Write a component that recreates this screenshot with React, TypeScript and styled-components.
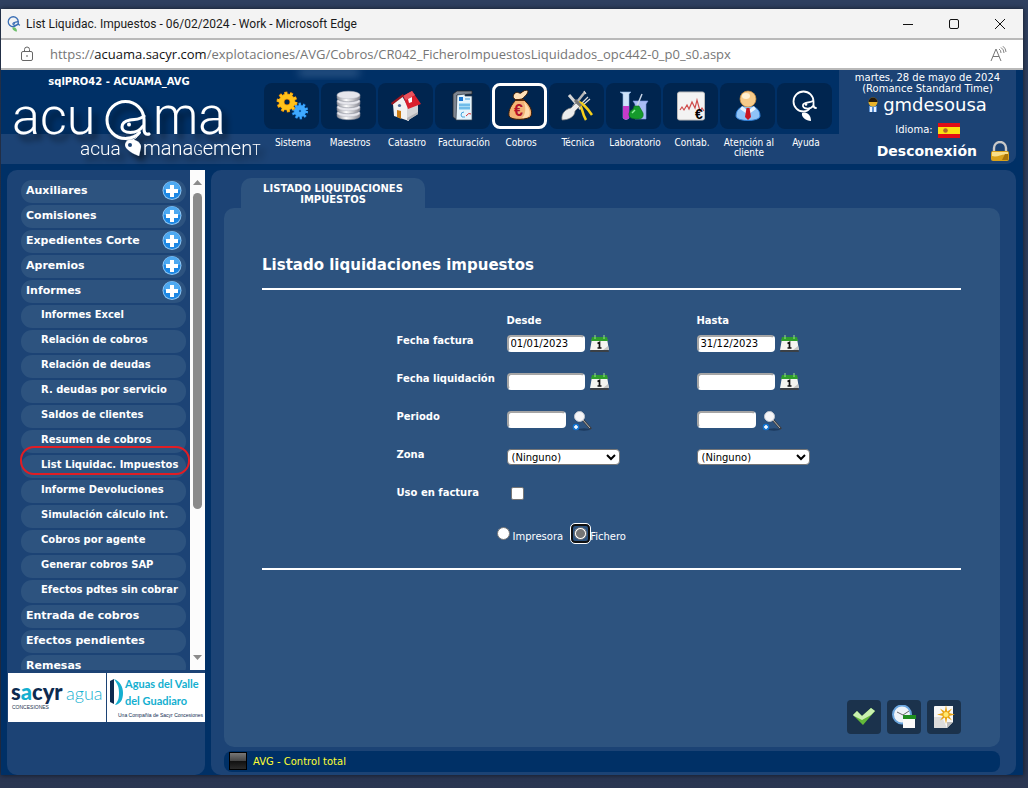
import React from "react";
import styled, { createGlobalStyle, css } from "styled-components";

const c = {
  deep: "#003066",
  band: "#1c4375",
  panel: "#2d537f",
  tile: "#00254f",
};

const Global = createGlobalStyle`
  * { box-sizing: border-box; }
  html, body { margin: 0; }
  body {
    font-family: "DejaVu Sans", Verdana, sans-serif;
    font-size: 10px;
    color: #fff;
    background: #2b3855;
  }
  a { color: inherit; text-decoration: none; }
  button { font: inherit; color: inherit; cursor: pointer; }
  svg { display: block; flex: none; }
`;

/* ---------- window ---------- */

const Desktop = styled.div`
  min-height: 100vh;
  display: flex;
  flex-direction: column;
  padding: 9px 5px 13px 1px;
  background: linear-gradient(#2f4060, #2a3652);
`;

const Window = styled.div`
  flex: 1;
  display: flex;
  flex-direction: column;
  background: ${c.deep};
  box-shadow: 0 0 5px rgba(0, 0, 0, 0.6);
`;

const TitleBar = styled.header`
  display: flex;
  align-items: center;
  height: 31px;
  padding-left: 5px;
  background: #f3f3f3;
  border-bottom: 2px solid #b9b9b9;
  color: #1b1b1b;
  font: 12px/16px Roboto, "Segoe UI", sans-serif;
`;

const WindowTitle = styled.span`
  flex: 1;
  margin-left: 4px;
`;

const WindowButton = styled.button`
  width: 46px;
  height: 29px;
  padding: 0;
  border: 0;
  background: none;
  display: flex;
  align-items: center;
  justify-content: center;
`;

const AddressBar = styled.div`
  display: flex;
  align-items: center;
  height: 30px;
  padding: 0 16px 0 19px;
  background: #fff;
  border-bottom: 2px solid #b9b9b9;
  color: #767676;
  font: 13px/20px "Open Sans", "Segoe UI", sans-serif;
`;

const Url = styled.span`
  flex: 1;
  margin-left: 16px;
  b { font-weight: 400; color: #111; }
`;

/* ---------- page header ---------- */

const Header = styled.header`
  position: relative;
  display: grid;
  grid-template-columns: 262px 1fr 177px;
  height: 94px;
  margin-right: 7px;
  border-bottom-right-radius: 10px;
  background: linear-gradient(${c.deep} 64px, ${c.band} 64px);
`;

const Glow = styled.div`
  position: absolute;
  left: 290px;
  top: 0;
  width: 76px;
  height: 10px;
  overflow: hidden;
  &::before {
    content: "";
    display: block;
    height: 5px;
    margin: 0 8px;
    background: rgba(130, 160, 195, 0.5);
    filter: blur(4px);
  }
`;

const Brand = styled.div`
  padding-top: 5px;
`;

const Environment = styled.div`
  padding-right: 26px;
  text-align: center;
  font-weight: 700;
  line-height: 14px;
`;

const Nav = styled.nav`
  display: flex;
  padding: 13px 0 0 1px;
  font-family: "DejaVu Sans Condensed", Tahoma, sans-serif;
  font-stretch: condensed;
`;

const NavLink = styled.a`
  width: 57px;
  display: flex;
  flex-direction: column;
  gap: 9px;
  text-align: center;
  line-height: 10px;
`;

const NavTile = styled.span<{ $on?: boolean }>`
  width: 55px;
  height: 46px;
  display: flex;
  align-items: center;
  justify-content: center;
  border-radius: 8px;
  background: ${c.tile};
  border: ${(p) => (p.$on ? "3px solid #fff" : "0")};
`;

const NavLabel = styled.span`
  padding-left: 1px;
`;

const Session = styled.div`
  display: flex;
  flex-direction: column;
  align-items: center;
  padding-top: 2px;
  background: ${c.band};
  border-bottom-right-radius: 10px;
  text-align: center;
  line-height: 11px;
`;

const User = styled.div`
  display: flex;
  align-items: center;
  gap: 5px;
  font-size: 18px;
  line-height: 22px;
`;

const Language = styled.div`
  display: flex;
  align-items: center;
  gap: 5px;
  margin-top: 6px;
  line-height: 16px;
`;

const Logout = styled.a`
  align-self: stretch;
  display: flex;
  align-items: center;
  justify-content: flex-end;
  gap: 13px;
  padding-right: 6px;
  margin-top: 2px;
  font-size: 14px;
  line-height: 22px;
  font-weight: 700;
`;

/* ---------- body ---------- */

const Body = styled.div`
  flex: 1;
  display: grid;
  grid-template-columns: 198px 1fr;
  gap: 6px;
  padding: 6px 7px 0 6px;
`;

const Sidebar = styled.aside`
  background: ${c.band};
  border-radius: 10px;
`;

const MenuArea = styled.div`
  display: flex;
  height: 500px;
  overflow: hidden;
`;

const Menu = styled.ul`
  flex: 1;
  list-style: none;
  margin: 0;
  padding: 10px 4px 0 14px;
  display: flex;
  flex-direction: column;
  gap: 2px;
`;

const MenuItem = styled.li`
  flex: none;
  height: 23px;
  border-radius: 11px;
  background: ${c.panel};
`;

const MenuLink = styled.a<{ $sub?: boolean }>`
  display: flex;
  justify-content: space-between;
  white-space: nowrap;
  font-weight: 700;
  ${(p) =>
    p.$sub
      ? css`padding-left: 20px; font-size: 10px; line-height: 20px;`
      : css`padding: 0 4px 0 5px; font-size: 11px; line-height: 21px;`}
`;

const Marked = styled.div`
  position: relative;
  &::after {
    content: "";
    position: absolute;
    top: -9px;
    left: -1px;
    right: -4px;
    height: 25px;
    border: 2px solid #e11d24;
    border-radius: 14px;
    pointer-events: none;
  }
`;

const ScrollTrack = styled.div`
  width: 15px;
  display: flex;
  flex-direction: column;
  align-items: center;
  padding: 10px 0;
  background: #fcfcfc;
`;

const ScrollThumb = styled.div`
  width: 9px;
  height: 316px;
  margin: 8px 0 auto;
  border-radius: 5px;
  background: #8b8b8b;
`;

const Partners = styled.div`
  display: flex;
  gap: 1px;
  margin: 3px 0 0 1px;
`;

const Partner = styled.div`
  flex: 1;
  height: 49px;
  background: #fff;
`;

const Main = styled.main`
  display: flex;
  flex-direction: column;
  padding: 8px 16px 3px 13px;
  background: ${c.band};
  border-radius: 10px;
`;

const Tab = styled.a`
  align-self: flex-start;
  width: 184px;
  height: 30px;
  margin-left: 17px;
  padding: 5px 10px 0;
  border-radius: 10px 10px 0 0;
  background: ${c.panel};
  text-align: center;
  font-weight: 700;
  line-height: 11px;
`;

const Panel = styled.section`
  flex: 1;
  display: flex;
  flex-direction: column;
  padding: 47px 39px 13px 38px;
  border-radius: 10px;
  background: ${c.panel};
`;

const Heading = styled.h1`
  margin: 0;
  padding-bottom: 13px;
  border-bottom: 2px solid #fff;
  font-size: 15px;
  line-height: 20px;
`;

const Form = styled.form`
  display: grid;
  grid-template-columns: 110px 190px 130px;
  grid-template-rows: 20px;
  grid-auto-rows: 38px;
  justify-content: center;
  padding: 21px 0 9px;
  border-bottom: 2px solid #fff;
  line-height: 20px;
`;

const Caption = styled.label`
  font-weight: 700;
`;

const ColumnHead = styled.span`
  font-weight: 700;
`;

const Field = styled.div`
  display: flex;
  align-items: flex-start;
  gap: 5px;
  padding-top: 4px;
`;

const TextInput = styled.input<{ $w: number }>`
  width: ${(p) => p.$w}px;
  height: 17px;
  padding: 0 2px;
  border: 2px solid #fff;
  border-top-color: #a5a5a5;
  border-left-color: #a5a5a5;
  border-radius: 4px;
  background: #fff;
  color: #000;
  font: 10px/13px "DejaVu Sans", Verdana, sans-serif;
`;

const Picker = styled.button<{ $gap?: number }>`
  padding: 0;
  margin-left: ${(p) => p.$gap || 0}px;
  border: 0;
  background: none;
`;

const SelectBox = styled.div`
  position: relative;
  display: flex;
  svg { position: absolute; right: 4px; top: 5px; pointer-events: none; }
`;

const Select = styled.select`
  appearance: none;
  width: 113px;
  height: 16px;
  padding: 0 4px;
  border: 1px solid #767676;
  border-radius: 4px;
  background: #fff;
  color: #000;
  font: 10px/13px "DejaVu Sans", Verdana, sans-serif;
`;

const Check = styled.input`
  appearance: none;
  width: 13px;
  height: 13px;
  margin: 0 0 0 4px;
  border: 1px solid #767676;
  border-radius: 2px;
  background: #fff;
`;

const Output = styled.div`
  grid-column: 1 / -1;
  display: flex;
  align-items: center;
  height: 25px;
  padding-left: 100px;
`;

const Option = styled.label<{ $before?: number; $after?: number }>`
  padding: 6px ${(p) => p.$after || 0}px 0 ${(p) => p.$before || 0}px;
  line-height: 12px;
`;

const Radio = styled.input`
  appearance: none;
  width: 13px;
  height: 13px;
  margin: 0;
  border: 1px solid #767676;
  border-radius: 50%;
  background: #fff;
  &:checked {
    border-color: #757575;
    background: radial-gradient(circle, #757575 4px, #fff 5px);
  }
`;

const FocusRing = styled.span`
  display: flex;
  padding: 1px;
  border: 2px solid #101010;
  border-radius: 4px;
  outline: 1px solid #fff;
`;

const Actions = styled.div`
  display: flex;
  justify-content: flex-end;
  gap: 6px;
  margin-top: auto;
`;

const Action = styled.button`
  width: 34px;
  height: 34px;
  padding: 0;
  border: 0;
  border-radius: 4px;
  background: #1b324c;
  display: flex;
  align-items: center;
  justify-content: center;
`;

const Status = styled.footer`
  display: flex;
  align-items: center;
  gap: 6px;
  height: 21px;
  margin-top: 4px;
  padding: 0 0 1px 5px;
  border-radius: 8px;
  background: ${c.deep};
  color: #ffff33;
`;

const StatusLight = styled.span`
  width: 18px;
  height: 18px;
  border: 1px solid #000;
  background: linear-gradient(#777, #444 50%, #111 52%, #2b2b2b);
`;

/* ---------- drawings ---------- */

const Mark = ({ size = 16, from = "#3b6fb5", to = "#6cbf6a", w = 2.6 }) => (
  <svg width={size} height={size} viewBox="0 0 32 32" fill="none" strokeLinecap="round">
    <path d="M27 18c-2 0-2.500-1-2.500-3v-3.500A10 10 0 1 0 14.500 21.500q4 0 6-3" stroke={from} strokeWidth={w} />
    <path d="M24 11c-3 2-9 1-10 4-1 4 7 5 10 1" stroke={from} strokeWidth={w} />
    <circle cx="17" cy="14.500" r="1.300" fill={from} />
    <path d="M13 23c5-2 9 2 9 8-5 0-10-4-9-8z" fill={to} />
  </svg>
);

const BrandLogo = () => (
  <svg width="262" height="74" viewBox="0 89 262 74" fill="#fff" overflow="visible" role="img" aria-label="acuama management">
    <defs>
      <filter id="soft" x="-10%" y="-10%" width="130%" height="150%">
        <feDropShadow dx="5" dy="6" stdDeviation="3" floodColor="#000" floodOpacity="0.55" />
      </filter>
    </defs>
    <g filter="url(#soft)" fontFamily="Roboto, sans-serif" fontWeight="300">
      <text x="11" y="134" fontSize="52">acu</text>
      <text x="152" y="134" fontSize="51">ma</text>
      <g fill="none" stroke="#fff" strokeLinecap="round">
        <path d="M148 134c-4 1-5-2-5-5v-9A18.500 18.500 0 1 0 124.500 138.500q9 0 14-6" strokeWidth="3" />
        <path d="M143 116c-4 4-9 3-14 4-5 1-8 3-8 7 0 7 15 8 21-1" strokeWidth="3" />
        <path d="M126 141c6 0 10-3 12-7" strokeWidth="1" />
      </g>
      <circle cx="128" cy="124.500" r="2" />
      <path d="M126 141c6-4 14 1 14 6l-2 9c-6-2-14-7-14-11 0-2 1-3 2-4z" />
      <text x="79" y="155" fontSize="19">acua</text>
      <text x="142" y="155" fontSize="20">mana<tspan fontSize="14">G</tspan>emen<tspan fontSize="14">T</tspan></text>
    </g>
    <circle cx="129" cy="145" r="2" fill={c.band} />
  </svg>
);

const Gear = ({ x, y, r, fill, edge }: { x: number; y: number; r: number; fill: string; edge: string }) => {
  const tooth = ((r + 1) * 6.283) / 20;
  return (
    <g transform={`translate(${x} ${y})`} fill="none">
      <circle r={r + 1} stroke={edge} strokeWidth="5" strokeDasharray={`${tooth}`} />
      <circle r={r - 1.5} stroke={edge} strokeWidth="6" />
      <circle r={r + 1} stroke={fill} strokeWidth="3.600" strokeDasharray={`${tooth}`} />
      <circle r={r - 1.5} stroke={fill} strokeWidth="4.600" />
    </g>
  );
};

const Icon = ({ children }: { children: React.ReactNode }) => (
  <svg width="32" height="32" viewBox="0 0 32 32">{children}</svg>
);

const icons: Record<string, React.ReactNode> = {
  Sistema: (
    <Icon>
      <Gear x={24} y={21} r={5} fill="#3fa9ff" edge="#1670c8" />
      <Gear x={11} y={12} r={7} fill="#ffc21a" edge="#e88a00" />
    </Icon>
  ),
  Maestros: (
    <Icon>
      <defs>
        <linearGradient id="disk">
          <stop stopColor="#8d8f99" /><stop offset=".4" stopColor="#fff" /><stop offset="1" stopColor="#85858f" />
        </linearGradient>
      </defs>
      {[25, 19, 13, 7].map((y) => (
        <g key={y}>
          <path d={`M4 ${y - 2}v3c0 5 23 5 23 0v-3z`} fill="url(#disk)" stroke="#7d808e" strokeWidth=".5" />
          <ellipse cx="15.500" cy={y - 2} rx="11.500" ry="3.800" fill="#e6e6ec" stroke="#b5b6c0" strokeWidth=".5" />
        </g>
      ))}
    </Icon>
  ),
  Catastro: (
    <Icon>
      <path d="M3 14l9-8 7 12v13L4 26z" fill="#f2f2f2" />
      <path d="M17 18l11-5v11l-11 7z" fill="#d4d4d6" />
      <path d="M13 6l9-5 9 13-13 5z" fill="#d91f2d" />
      <path d="M13 6l9-5 3 4-9 5z" fill="#e9525c" />
      <path d="M1 13L13 4l1 2-12 9z" fill="#9c1620" />
      <path d="M18 9l4-2v5l-3 1z" fill="#fff" />
      <path d="M7 20l4 1v8l-4-2z" fill="#c97a12" />
      <circle cx="9.500" cy="15.500" r="1.600" fill="#4a6a9a" />
      <path d="M17 31l11-7v-2l-11 6z" fill="#b5b5b8" />
    </Icon>
  ),
  Facturación: (
    <Icon>
      <path d="M6 4l4-3h15v3L10 5v25l-4-3z" fill="#7d8590" stroke="#222" strokeWidth=".7" />
      <path d="M10 5l8-1v2h7v24H9z" fill="#e4f4fd" stroke="#384451" strokeWidth=".7" />
      <path d="M12 7h4v4h-4z" fill="#1976d2" />
      <path d="M12 13h11v7H12z" fill="#a6dbf5" />
      <path d="M18 9h5M12 15h11M12 18h11" stroke="#3a9ddd" />
      <path d="M19 26q3-4 5-2" stroke="#d33" fill="none" />
      <path d="M17 22q-3 0-3 3t4 2" stroke="#48a4dc" fill="none" />
    </Icon>
  ),
  Cobros: (
    <Icon>
      <path d="M11 3c3-2 4 1 6 0 3-3 7-4 7-1-1 3-4 5-6 7l-6 1c-3-2-4-4-1-7z" fill="#ffe0b8" stroke="#3a1c08" />
      <path d="M12 10h8c6 5 9 11 7 16-2 4-20 5-22 0-1-6 3-12 7-16z" fill="#f4b476" stroke="#3a1c08" />
      <path d="M20 12c5 5 7 10 5 14-2 2-5 2-7 2 4-4 4-10 2-16z" fill="#ffdcae" />
      <path d="M11 10h9" stroke="#5a2b0c" strokeWidth="2" />
      <text x="10" y="26" fontSize="16" fontWeight="700" fill="#b3122a" fontFamily="Liberation Sans, sans-serif">€</text>
    </Icon>
  ),
  Técnica: (
    <Icon>
      <path d="M8 5l12 14" stroke="#d5d5d5" strokeWidth="3" />
      <path d="M12 17L24 2" stroke="#b8b8b8" strokeWidth="2.500" />
      <path d="M1 30c-1-6 3-11 9-12l5-5 4 3-5 5c0 6-7 9-13 9z" fill="#ececec" stroke="#777" strokeWidth=".7" />
      <path d="M23 1l2 3M21 13l6-6M22 15l7-6" stroke="#ddd" strokeWidth="1.200" />
      <path d="M17 13c5 3 3 9 8 17M18 12c5 2 9 7 13 13" fill="none" stroke="#f6cf1b" strokeWidth="2.500" />
      <path d="M14 10l6 6" stroke="#777" strokeWidth="3" />
    </Icon>
  ),
  Laboratorio: (
    <Icon>
      <path d="M2 2h11l-2 2v24q-3 3-6 0V4z" fill="#cfe4fb" stroke="#8cb2e0" strokeWidth=".6" />
      <path d="M5 16h6v12q-3 3-6 0z" fill="#c63bcb" />
      <path d="M15 11h15l-2 3v15H17V14z" fill="#a9bdf5" stroke="#7c96e0" strokeWidth=".6" />
      <path d="M24 4l-5 12" stroke="#c9d6e8" strokeWidth="1.500" />
      <path d="M16 16h5l4 7c1 5-2 6-6 6s-9-1-8-6c1-3 5-3 5-7z" fill="#159a2c" stroke="#0c6a1c" strokeWidth=".6" />
      <path d="M14 23l3-3" stroke="#8ef09a" strokeWidth="1.500" />
    </Icon>
  ),
  "Contab.": (
    <Icon>
      <rect x="2.500" y="2" width="27" height="28" rx="2" fill="#f3f3f3" stroke="#bbb" />
      <path d="M5 20l2-3 2 3 3-5 2 4 3-7 3 6 2-8 3 11 2-3 2 3" fill="none" stroke="#cf4b4b" strokeWidth="1.200" />
      <text x="20" y="29" fontSize="14" fontWeight="700" fill="#000" fontFamily="Liberation Sans, sans-serif">€</text>
    </Icon>
  ),
  "Atención al cliente": (
    <Icon>
      <path d="M4 26c0-7 5-10 12-10s12 3 12 10c0 6-24 6-24 0z" fill="#8fc3f7" stroke="#2f7fd6" />
      <path d="M10 16l6 5 6-5 2 3-7 5h-2l-7-5z" fill="#e8f4ff" />
      <path d="M14.500 18h3l1.500 9-3 3-3-3z" fill="#c9151f" />
      <circle cx="16" cy="9" r="8" fill="#f7cb8a" stroke="#c98b3c" strokeWidth=".7" />
      <ellipse cx="14" cy="6" rx="4" ry="3" fill="#fff0d2" />
    </Icon>
  ),
  Ayuda: <Mark size={32} from="#fff" to="#fff" w={1.8} />,
};

const Plus = () => (
  <svg width="20" height="20" viewBox="0 0 20 20">
    <circle cx="10" cy="10.500" r="9.500" fill="#8cc6f5" />
    <circle cx="10" cy="10.500" r="8.500" fill="#1b86e3" />
    <path d="M2 9.500a8 8 0 0 1 16 0c-4 2-12 2-16 0z" fill="#4da9f1" />
    <path d="M8 5h4v4h4v4h-4v4H8v-4H4V9h4z" fill="#fff" />
  </svg>
);

const Calendar = () => (
  <svg width="19" height="18" viewBox="0 0 19 18">
    <path d="M1 14h17l1 3H0z" fill="#3b4045" />
    <path d="M2 4h15l2 11H0z" fill="#f5f5f0" />
    <path d="M2 2h15l1 4H1z" fill="#2f9e2b" />
    <path d="M5 0v4M14 0v4" stroke="#9be08f" />
    <path d="M13 15l5-4 1 4z" fill="#c7c7c4" />
    <path d="M7.500 8.500l2-1V13M7.500 13h4" fill="none" stroke="#111" strokeWidth="1.700" />
  </svg>
);

const Search = () => (
  <svg width="20" height="20" viewBox="0 0 20 20">
    <ellipse cx="12" cy="18.500" rx="6" ry="1.200" fill="#1c3a5e" />
    <path d="M11 9l8 9" stroke="#3c3c40" strokeWidth="2.400" />
    <path d="M11 9l7 8" stroke="#b9b9b4" strokeWidth="1" />
    <circle cx="7.500" cy="5.500" r="5" fill="#f4f5f8" stroke="#c3c7cf" />
    <circle cx="4" cy="16" r="3.300" fill="#1477d4" />
    <path d="M4 14v4M2 16h4" stroke="#fff" strokeWidth="1.500" />
  </svg>
);

const Chevron = () => (
  <svg width="10" height="7" viewBox="0 0 10 7">
    <path d="M1 1l4 4 4-4" fill="none" stroke="#000" strokeWidth="2" />
  </svg>
);

const Arrow = ({ down }: { down?: boolean }) => (
  <svg width="9" height="5" viewBox="0 0 9 5">
    <path d={down ? "M0 0h9L4.500 5z" : "M0 5h9L4.500 0z"} fill="#8b8b8b" />
  </svg>
);

const UserIcon = () => (
  <svg width="10" height="16" viewBox="0 0 10 16">
    <path d="M1 9h8v6H1z" fill="#5b8fd0" />
    <path d="M2 10h2v5H2zM6 10h2v5H6z" fill="#e8f2ff" />
    <circle cx="5" cy="5" r="4.500" fill="#e9b42a" />
    <path d="M0.500 5a4.500 4.500 0 0 1 9 0z" fill="#241a0c" />
  </svg>
);

const Flag = () => (
  <svg width="22" height="15" viewBox="0 0 22 15">
    <path d="M0 0h22v15H0z" fill="#e00d16" />
    <path d="M0 4h22v7H0z" fill="#fbe012" />
    <circle cx="7.500" cy="7.500" r="2.300" fill="#b0632a" />
  </svg>
);

const Padlock = () => (
  <svg width="20" height="21" viewBox="0 0 20 21">
    <path d="M4 11V7a6 6 0 0 1 12 0v4" fill="none" stroke="#c9c9c9" strokeWidth="2.400" />
    <rect x="1" y="10" width="18" height="10" rx="2" fill="#d9a21b" />
    <path d="M2 11h16v3c-6-2-10 3-16 1z" fill="#f8df8a" />
    <path d="M15 13h3v6h-6z" fill="#a87408" />
  </svg>
);

const SacyrLogo = () => (
  <svg width="98" height="49" viewBox="0 0 98 49" role="img" aria-label="Sacyr agua concesiones">
    <g fontFamily="Lato, sans-serif">
      <text x="3" y="27" fontSize="22" fontWeight="900" fill="#0d2a4f">
        s<tspan fill="#14afd0">a</tspan>cyr
      </text>
      <text x="58" y="27" fontSize="18" fontWeight="300" fill="#14afd0">agua</text>
    </g>
    <text x="4" y="36" fontSize="5" fill="#22344f" fontFamily="Liberation Sans, sans-serif">CONCESIONES</text>
  </svg>
);

const GuadiaroLogo = () => (
  <svg width="98" height="49" viewBox="0 0 98 49" role="img" aria-label="Aguas del Valle del Guadiaro">
    <path d="M3 8l4-2v25l-4-2z" fill="#0d2a4f" />
    <path d="M7 6c4 6 5 8 5 14s-1 8-4 12c6-1 8-6 8-12S13 8 7 6z" fill="#14afd0" />
    <text x="18" y="15" fontSize="11" fontWeight="700" fill="#14afd0" fontFamily="Lato, sans-serif">Aguas del Valle</text>
    <text x="18" y="32" fontSize="11" fontWeight="700" fill="#14afd0" fontFamily="Lato, sans-serif">del Guadiaro</text>
    <text x="11" y="44" fontSize="5" fill="#0d2a4f" fontFamily="Liberation Sans, sans-serif">Una Compañía de Sacyr Concesiones</text>
  </svg>
);

/* ---------- data ---------- */

const navItems = [
  "Sistema", "Maestros", "Catastro", "Facturación", "Cobros",
  "Técnica", "Laboratorio", "Contab.", "Atención al cliente", "Ayuda",
];

const menuItems: { text: string; sub?: boolean; plus?: boolean; marked?: boolean }[] = [
  { text: "Auxiliares", plus: true },
  { text: "Comisiones", plus: true },
  { text: "Expedientes Corte", plus: true },
  { text: "Apremios", plus: true },
  { text: "Informes", plus: true },
  { text: "Informes Excel", sub: true },
  { text: "Relación de cobros", sub: true },
  { text: "Relación de deudas", sub: true },
  { text: "R. deudas por servicio", sub: true },
  { text: "Saldos de clientes", sub: true },
  { text: "Resumen de cobros", sub: true },
  { text: "List Liquidac. Impuestos", sub: true, marked: true },
  { text: "Informe Devoluciones", sub: true },
  { text: "Simulación cálculo int.", sub: true },
  { text: "Cobros por agente", sub: true },
  { text: "Generar cobros SAP", sub: true },
  { text: "Efectos pdtes sin cobrar", sub: true },
  { text: "Entrada de cobros" },
  { text: "Efectos pendientes" },
  { text: "Remesas" },
];

const DateField = ({ id, label, value }: { id: string; label: string; value?: string }) => (
  <Field>
    <TextInput $w={78} id={id} aria-label={label} defaultValue={value} />
    <Picker type="button" aria-label={`Calendario ${label}`}><Calendar /></Picker>
  </Field>
);

const PeriodField = ({ id, label }: { id: string; label: string }) => (
  <Field>
    <TextInput $w={59} id={id} aria-label={label} />
    <Picker type="button" $gap={1} aria-label={`Buscar ${label}`}><Search /></Picker>
  </Field>
);

const ZoneField = ({ id, label }: { id: string; label: string }) => (
  <Field>
    <SelectBox>
      <Select id={id} aria-label={label}><option>(Ninguno)</option></Select>
      <Chevron />
    </SelectBox>
  </Field>
);

export default function App() {
  return (
    <Desktop>
      <Global />
      <Window>
        <TitleBar>
          <Mark size={16} />
          <WindowTitle>List Liquidac. Impuestos - 06/02/2024 - Work - Microsoft Edge</WindowTitle>
          <WindowButton aria-label="Minimizar">
            <svg width="10" height="10"><path d="M0 5.500h10" stroke="#111" /></svg>
          </WindowButton>
          <WindowButton aria-label="Maximizar">
            <svg width="10" height="10"><rect x=".5" y=".5" width="9" height="9" rx="1.500" fill="none" stroke="#111" /></svg>
          </WindowButton>
          <WindowButton aria-label="Cerrar">
            <svg width="10" height="10"><path d="M0 0l10 10M10 0L0 10" stroke="#111" /></svg>
          </WindowButton>
        </TitleBar>
        <AddressBar>
          <svg width="14" height="16" viewBox="0 0 14 16" fill="none" stroke="#666">
            <rect x="1.500" y="5.500" width="11" height="9" rx="1.500" />
            <path d="M4.500 5V3.500a2.500 2.500 0 0 1 5 0V5" />
            <path d="M6.500 10h1" strokeWidth="2" />
          </svg>
          <Url>
            https://<b>acuama.sacyr.com</b>/explotaciones/AVG/Cobros/CR042_FicheroImpuestosLiquidados_opc442-0_p0_s0.aspx
          </Url>
          <svg width="17" height="16" viewBox="0 0 17 16" fill="none" stroke="#767676">
            <path d="M1 15L6 3l5 12M3 10.500h6" />
            <path d="M9 3q2 1 2 4M11 1.500q3 2 3 5.500M12.500 0q3.500 2 3.500 6" strokeWidth=".9" />
          </svg>
        </AddressBar>

        <Header>
          <Glow />
          <Brand>
            <Environment>sqlPRO42 - ACUAMA_AVG</Environment>
            <BrandLogo />
          </Brand>
          <Nav>
            {navItems.map((name) => (
              <NavLink href="#" key={name}>
                <NavTile $on={name === "Cobros"}>{icons[name]}</NavTile>
                <NavLabel>{name}</NavLabel>
              </NavLink>
            ))}
          </Nav>
          <Session>
            <div>martes, 28 de mayo de 2024</div>
            <div>(Romance Standard Time)</div>
            <User><UserIcon />gmdesousa</User>
            <Language>Idioma: <Flag /></Language>
            <Logout href="#">Desconexión<Padlock /></Logout>
          </Session>
        </Header>

        <Body>
          <Sidebar>
            <MenuArea>
              <Menu>
                {menuItems.map((item) => {
                  const link = (
                    <MenuLink href="#" $sub={item.sub}>
                      {item.text}
                      {item.plus && <Plus />}
                    </MenuLink>
                  );
                  return (
                    <MenuItem key={item.text}>
                      {item.marked ? <Marked>{link}</Marked> : link}
                    </MenuItem>
                  );
                })}
              </Menu>
              <ScrollTrack>
                <Arrow />
                <ScrollThumb />
                <Arrow down />
              </ScrollTrack>
            </MenuArea>
            <Partners>
              <Partner><SacyrLogo /></Partner>
              <Partner><GuadiaroLogo /></Partner>
            </Partners>
          </Sidebar>

          <Main>
            <Tab href="#">LISTADO LIQUIDACIONES IMPUESTOS</Tab>
            <Panel>
              <Heading>Listado liquidaciones impuestos</Heading>
              <Form>
                <span />
                <ColumnHead>Desde</ColumnHead>
                <ColumnHead>Hasta</ColumnHead>

                <Caption htmlFor="factura-desde">Fecha factura</Caption>
                <DateField id="factura-desde" label="Fecha factura desde" value="01/01/2023" />
                <DateField id="factura-hasta" label="Fecha factura hasta" value="31/12/2023" />

                <Caption htmlFor="liq-desde">Fecha liquidación</Caption>
                <DateField id="liq-desde" label="Fecha liquidación desde" />
                <DateField id="liq-hasta" label="Fecha liquidación hasta" />

                <Caption htmlFor="periodo-desde">Periodo</Caption>
                <PeriodField id="periodo-desde" label="Periodo desde" />
                <PeriodField id="periodo-hasta" label="Periodo hasta" />

                <Caption htmlFor="zona-desde">Zona</Caption>
                <ZoneField id="zona-desde" label="Zona desde" />
                <ZoneField id="zona-hasta" label="Zona hasta" />

                <Caption htmlFor="uso">Uso en factura</Caption>
                <Field><Check type="checkbox" id="uso" /></Field>
                <span />

                <Output>
                  <Radio type="radio" name="salida" id="impresora" />
                  <Option htmlFor="impresora" $before={3} $after={8}>Impresora</Option>
                  <FocusRing><Radio type="radio" name="salida" id="fichero" defaultChecked /></FocusRing>
                  <Option htmlFor="fichero">Fichero</Option>
                </Output>
              </Form>
              <Actions>
                <Action aria-label="Aceptar">
                  <svg width="24" height="20" viewBox="0 0 24 20">
                    <path d="M1 8l4-4 5 5L19 1l4 3-12 14z" fill="#63b83a" />
                    <path d="M1 8l4-4 5 5L19 1l4 3-4 4-9 5-8-4z" fill="#c9f0b0" />
                  </svg>
                </Action>
                <Action aria-label="Programar">
                  <svg width="24" height="24" viewBox="0 0 24 24">
                    <circle cx="10" cy="9.500" r="9" fill="#eef3f8" stroke="#6aa5dd" strokeWidth="2" />
                    <path d="M5 7l6 3 6-4" fill="none" stroke="#666" />
                    <path d="M11 13h12v10H11z" fill="#fafafa" />
                    <path d="M11 10h13v4H11z" fill="#1f8e1f" />
                  </svg>
                </Action>
                <Action aria-label="Nuevo">
                  <svg width="22" height="24" viewBox="0 0 22 24">
                    <path d="M2 1h18v16l-6 6H2q-1 0-1-1V2q0-1 1-1z" fill="#f7f7f7" />
                    <path d="M1 12h8l5 11H2q-1 0-1-1z" fill="#dcdcdc" />
                    <path d="M14 23v-6h6z" fill="#bbb" />
                    <path d="M13 0l1.200 6.500 4.800-3-3 4.500 6 1.500-6 1.500 3 4.500-4.800-3L13 19l-1.200-6.500-4.800 3 3-4.500-6-1.500 6-1.500-3-4.500 4.800 3z" fill="#e9a414" />
                    <circle cx="13" cy="9.500" r="2.500" fill="#ffe870" />
                  </svg>
                </Action>
              </Actions>
            </Panel>
            <Status><StatusLight />AVG - Control total</Status>
          </Main>
        </Body>
      </Window>
    </Desktop>
  );
}
